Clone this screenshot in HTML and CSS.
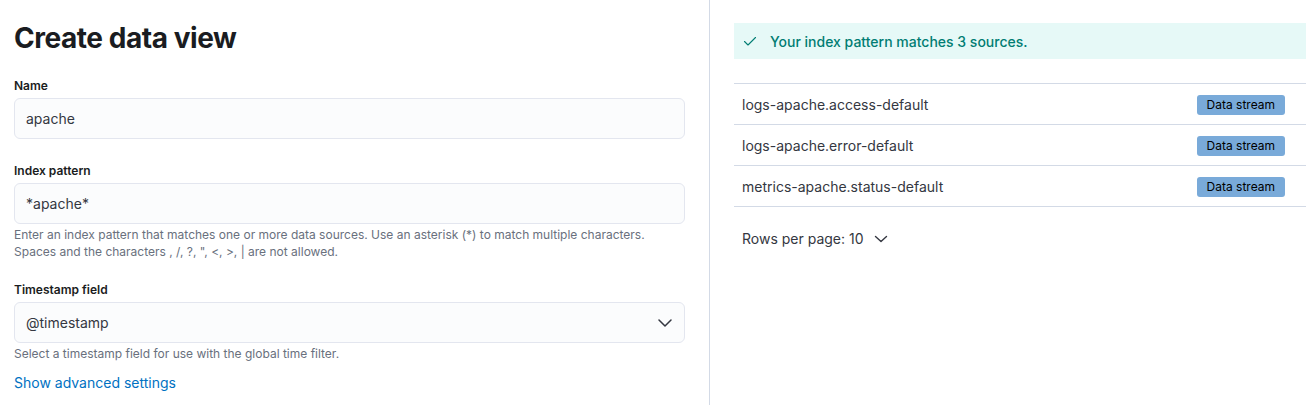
FILE: index.html
```html
<!DOCTYPE html>
<html>
<head>
<meta charset="utf-8">
<link rel="stylesheet" href="styles.css">
</head>
<body>
<div class="page">
  <section class="form-panel">
    <h1 class="title">Create data view</h1>
    <div class="field">
      <label class="label">Name</label>
      <div class="input">apache</div>
    </div>
    <div class="field">
      <label class="label">Index pattern</label>
      <div class="input">*apache*</div>
      <div class="help">Enter an index pattern that matches one or more data sources. Use an asterisk (*) to match multiple characters.<br>Spaces and the characters , /, ?, ", &lt;, &gt;, | are not allowed.</div>
    </div>
    <div class="field">
      <label class="label">Timestamp field</label>
      <div class="input select"><span>@timestamp</span>
        <svg class="chev" width="14" height="8" viewBox="0 0 14 8"><path d="M1 1 L7 7 L13 1" fill="none" stroke="#343741" stroke-width="1.5" stroke-linecap="round" stroke-linejoin="round"/></svg>
      </div>
      <div class="help">Select a timestamp field for use with the global time filter.</div>
    </div>
    <a class="link">Show advanced settings</a>
  </section>
  <section class="preview-panel">
    <div class="callout">
      <svg class="check" width="16" height="16" viewBox="0 0 16 16"><path d="M2.5 8.5 L6 12 L13.5 4.5" fill="none" stroke="#017d73" stroke-width="1.1" stroke-linecap="round" stroke-linejoin="round"/></svg>
      <span>Your index pattern matches 3 sources.</span>
    </div>
    <div class="table">
      <div class="row"><span class="name">logs-apache.access-default</span><span class="badge">Data stream</span></div>
      <div class="row"><span class="name">logs-apache.error-default</span><span class="badge">Data stream</span></div>
      <div class="row"><span class="name">metrics-apache.status-default</span><span class="badge">Data stream</span></div>
    </div>
    <div class="pager">Rows per page: 10
      <svg class="chev-small" width="14" height="8" viewBox="0 0 14 8"><path d="M1.5 1.5 L7 6.5 L12.5 1.5" fill="none" stroke="#343741" stroke-width="1.4" stroke-linecap="round" stroke-linejoin="round"/></svg>
    </div>
  </section>
</div>
</body>
</html>
```
FILE: styles.css
```css
* { box-sizing: border-box; }
html, body { margin: 0; padding: 0; background: #fff; }
body { font-family: Inter, "Noto Sans", sans-serif; color: #343741; width: 1306px; height: 405px; overflow: hidden; }
.page { display: flex; height: 405px; }
.form-panel { width: 710px; border-right: 1px solid #d3dae6; padding: 18px 24px 0 14px; display: flex; flex-direction: column; }
.title { margin: 0 0 20px; font-size: 28px; line-height: 40px; font-weight: 700; color: #1a1c21; letter-spacing: -0.45px; }
.field { display: flex; flex-direction: column; margin-bottom: 24px; }
.label { font-size: 12px; line-height: 16px; font-weight: 600; color: #1a1c21; margin-bottom: 4px; }
.input { height: 41px; border: 1px solid #e3e6ef; border-radius: 6px; background: #fbfcfd; font-size: 14px; padding: 0 11px; display: flex; align-items: center; color: #343741; }
.select { justify-content: space-between; padding-right: 12px; }
.help { font-size: 12px; line-height: 17px; color: #69707d; margin-top: 2px; margin-bottom: -2px; }
.link { font-size: 14px; line-height: 20px; color: #0071c2; margin-top: -11px; }
.preview-panel { flex: 1; padding: 23px 0 0 24px; display: flex; flex-direction: column; }
.callout { height: 36px; background: #e6f9f7; color: #017d73; font-size: 14px; font-weight: 500; display: flex; align-items: center; padding-left: 8px; }
.check { margin-right: 12px; }
.table { margin-top: 24px; border-top: 1px solid #d3dae6; }
.row { height: 41px; border-bottom: 1px solid #d3dae6; display: flex; align-items: center; justify-content: space-between; padding: 0 21px 0 8px; font-size: 14px; color: #343741; }
.badge { background: #79aad9; color: #000; font-size: 12px; line-height: 20px; height: 20px; padding: 0 10px; border-radius: 3px; font-weight: 400; margin-top: 2px; }
.pager { margin-top: 22px; padding-left: 8px; font-size: 14px; line-height: 20px; display: flex; align-items: center; color: #343741; }
.chev-small { margin-left: 10px; }
```
